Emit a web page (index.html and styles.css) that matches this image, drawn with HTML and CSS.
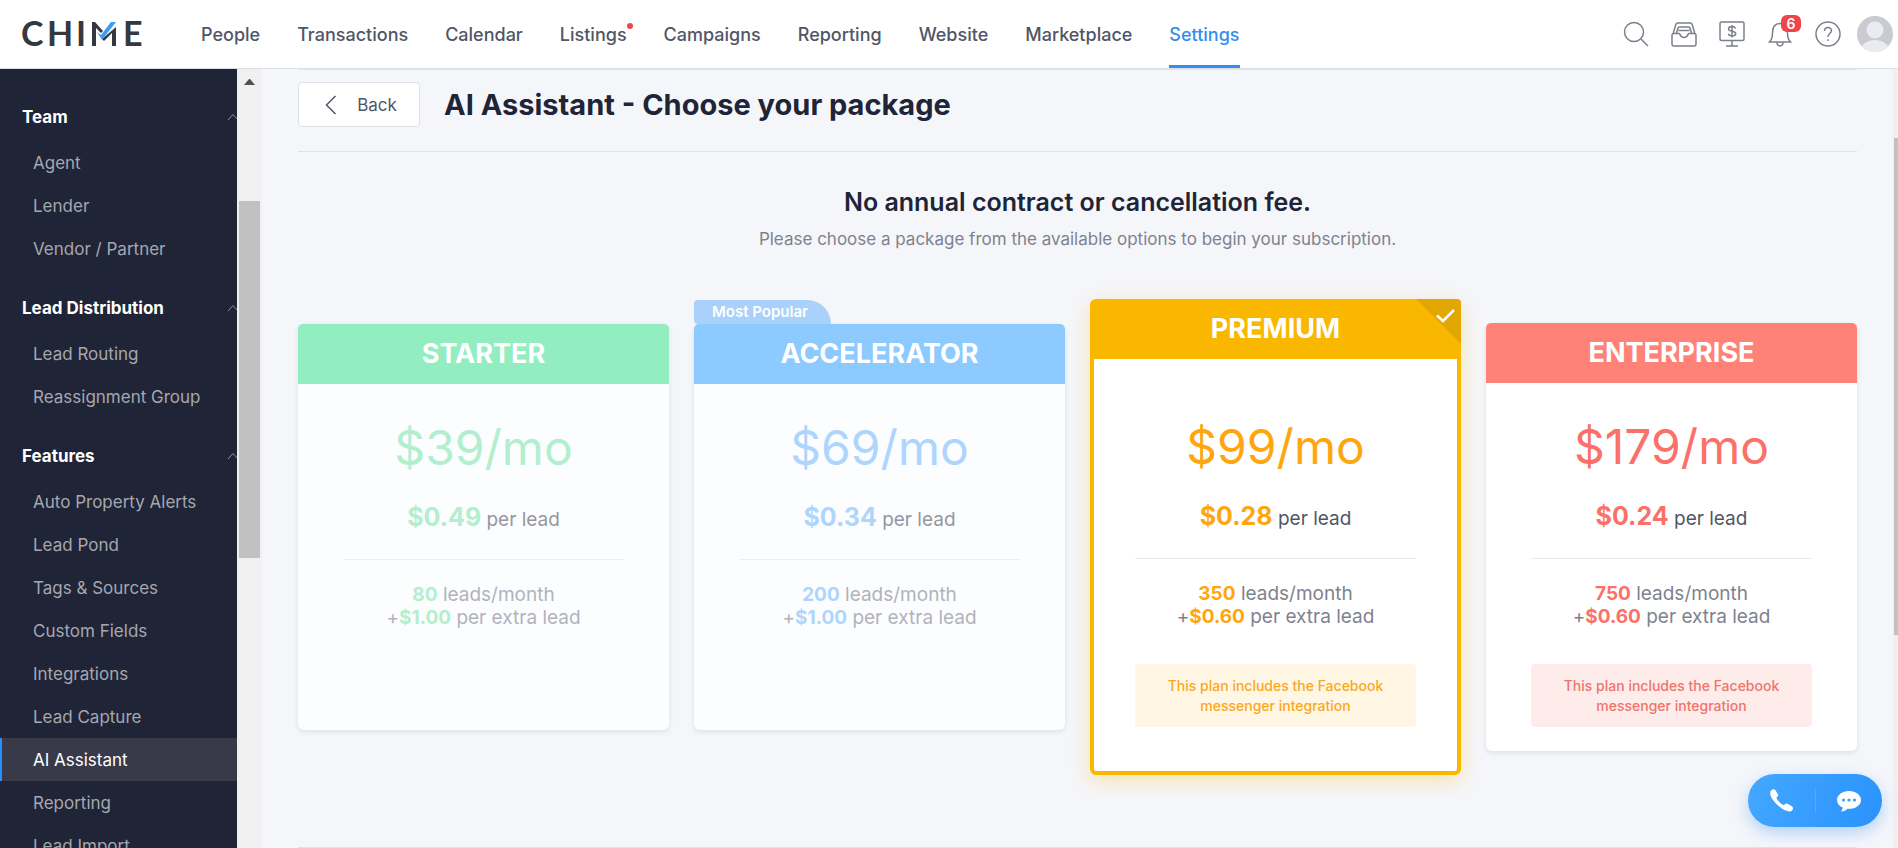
FILE: index.html
```html
<!DOCTYPE html>
<html lang="en">

<head>
  <meta charset="UTF-8">
  <meta name="viewport" content="width=device-width, initial-scale=1.0">
  <title>Chime - AI Assistant</title>
  <link rel="stylesheet" href="styles.css">
</head>
<body>
  <header class="topbar">
    <a class="logo" href="#" aria-label="Chime">
      <svg width="124" height="44" viewBox="0 0 124 44">
        <text class="logo-text" x="0 26 55 102" y="34">CHIE</text>
        <path fill="#36383f" d="M71 10h3l8 9-2 2-5-5v18h-4zM95 15v19h-4V21l-8 8-2-2z" />
        <path fill="#3b9cf8" d="M76 20l4 3L90 10h5L81 28z" />
      </svg>
    </a>
    <nav class="nav">
      <a href="#">People</a>
      <a href="#">Transactions</a>
      <a href="#">Calendar</a>
      <a href="#" class="has-dot">Listings</a>
      <a href="#">Campaigns</a>
      <a href="#">Reporting</a>
      <a href="#">Website</a>
      <a href="#">Marketplace</a>
      <a href="#" class="active">Settings</a>
    </nav>
    <div class="tools">
      <button class="tool" aria-label="Search">
        <svg viewBox="0 0 26 26"><circle cx="11" cy="11" r="9.5" /><path d="M18 18l7 7" /></svg>
      </button>
      <button class="tool" aria-label="Inbox">
        <svg viewBox="0 0 26 26"><path d="M2 13L5 3q.3-1 1.500-1h13q1.200 0 1.500 1L24 13M5.500 12L7 7q.3-1 1.300-1h9.400q1 0 1.300 1l1.500 5M7.500 9.500h11M1 14.500q0-2 2-2h5.500c.5 0 .5 4 4.500 4s4-4 4.500-4H23q2 0 2 2V23q0 2-2 2H3q-2 0-2-2z" /></svg>
      </button>
      <button class="tool" aria-label="Billing">
        <svg viewBox="0 0 26 26"><rect x="1" y="1" width="24" height="18.500" rx="1.500" /><path d="M13 20v5M7 25h12M16.500 7.500c-.5-1.200-1.700-2-3.500-2-2 0-3.500.9-3.500 2.400 0 3.300 7.200 1.300 7.200 4.600 0 1.500-1.600 2.500-3.700 2.500-1.900 0-3.200-.8-3.700-2.200M13 4v12.500" /></svg>
      </button>
      <button class="tool" aria-label="Notifications">
        <svg viewBox="0 0 26 26"><path d="M2.500 21c2.500-2.500 3-4 3-9 0-5 2-9.500 7.500-9.500s7.500 4.500 7.500 9.500c0 5 .5 6.500 3 9zM10 21.500c0 4.500 6 4.500 6 0" /></svg>
        <span class="badge">6</span>
      </button>
      <button class="tool" aria-label="Help">
        <svg viewBox="0 0 26 26"><circle cx="13" cy="13" r="12" /><path d="M9.500 10c0-4.700 7-4.500 7-.5 0 3-3.500 3-3.500 6.500M13 18.200v1.800" /></svg>
      </button>
    </div>
    <a class="avatar" href="#" aria-label="My account">
      <svg viewBox="0 0 36 36">
        <clipPath id="round"><circle cx="18" cy="18" r="18" /></clipPath>
        <g clip-path="url(#round)">
          <rect width="36" height="36" fill="#cacad2" />
          <circle cx="18" cy="14" r="8.500" fill="#ebecf1" />
          <ellipse cx="18" cy="36" rx="15" ry="12" fill="#ebecf1" />
        </g>
      </svg>
    </a>
  </header>

  <div class="page">
    <aside class="sidebar">
      <section class="group">
        <h4>Team <svg class="caret" viewBox="0 0 12 8"><path d="M1 7l5-5.500L11 7" /></svg></h4>
        <a href="#">Agent</a>
        <a href="#">Lender</a>
        <a href="#">Vendor / Partner</a>
      </section>
      <section class="group">
        <h4>Lead Distribution <svg class="caret" viewBox="0 0 12 8"><path d="M1 7l5-5.500L11 7" /></svg></h4>
        <a href="#">Lead Routing</a>
        <a href="#">Reassignment Group</a>
      </section>
      <section class="group">
        <h4>Features <svg class="caret" viewBox="0 0 12 8"><path d="M1 7l5-5.500L11 7" /></svg></h4>
        <a href="#">Auto Property Alerts</a>
        <a href="#">Lead Pond</a>
        <a href="#">Tags &amp; Sources</a>
        <a href="#">Custom Fields</a>
        <a href="#">Integrations</a>
        <a href="#">Lead Capture</a>
        <a href="#" class="active">AI Assistant</a>
        <a href="#">Reporting</a>
        <a href="#">Lead Import</a>
      </section>
    </aside>
    <div class="side-scroll"><div class="arrow"></div><div class="thumb"></div></div>

    <main class="main">
      <div class="head">
        <button class="back">
          <svg width="12" height="20" viewBox="0 0 12 20"><path d="M10.500 1L1.500 10l9 9" /></svg>
          Back
        </button>
        <h1>AI Assistant - Choose your package</h1>
      </div>

      <div class="intro">
        <h2>No annual contract or cancellation fee.</h2>
        <p>Please choose a package from the available options to begin your subscription.</p>
      </div>

      <div class="plans">
        <article class="plan starter faded">
          <h3>STARTER</h3>
          <div class="body">
            <div class="price">$39/mo</div>
            <div class="rate"><b>$0.49</b> per lead</div>
            <div class="leads"><b>80</b> leads/month<br>+<b>$1.00</b> per extra lead</div>
          </div>
        </article>
        <article class="plan accelerator faded">
          <span class="popular">Most Popular</span>
          <h3>ACCELERATOR</h3>
          <div class="body">
            <div class="price">$69/mo</div>
            <div class="rate"><b>$0.34</b> per lead</div>
            <div class="leads"><b>200</b> leads/month<br>+<b>$1.00</b> per extra lead</div>
          </div>
        </article>
        <article class="plan premium selected">
          <svg class="corner" viewBox="0 0 45 45"><path fill="#e3a703" d="M0 0h41q4 0 4 4v41z" /><path fill="none" stroke="#fff" stroke-width="2.500" d="M21 16.500l6 5.500L38 11" /></svg>
          <h3>PREMIUM</h3>
          <div class="body">
            <div class="price">$99/mo</div>
            <div class="rate"><b>$0.28</b> per lead</div>
            <div class="leads"><b>350</b> leads/month<br>+<b>$0.60</b> per extra lead</div>
            <div class="note">This plan includes the Facebook messenger integration</div>
          </div>
        </article>
        <article class="plan enterprise">
          <h3>ENTERPRISE</h3>
          <div class="body">
            <div class="price">$179/mo</div>
            <div class="rate"><b>$0.24</b> per lead</div>
            <div class="leads"><b>750</b> leads/month<br>+<b>$0.60</b> per extra lead</div>
            <div class="note">This plan includes the Facebook messenger integration</div>
          </div>
        </article>
      </div>
    </main>
    <div class="page-scroll"><div class="thumb"></div></div>
  </div>

  <div class="contact">
    <button aria-label="Call">
      <svg viewBox="0 0 24 24"><path d="M2 1.500C3.500 0 5.500-.3 6.500 1.200L9 5.500c.8 1.400-.8 2.300-1.500 3.300-.6 1 5.500 7.500 7.500 7.200 1.200-.3 2-2 3.500-1.200l4.300 2.400c1.600 1 1.500 2.500.4 4C18 27.500-3.500 8 2 1.500z" /></svg>
    </button>
    <button aria-label="Chat">
      <svg viewBox="0 0 24 24"><path d="M12 2c6.600 0 12 3.900 12 8.900s-5.400 8.900-12 8.900h-1.500C9 21.500 6.500 22.500 4 22.500c1-1.200 1.700-2.500 1.700-4C2.200 17 0 14.200 0 10.900 0 5.900 5.400 2 12 2z" /><g fill="#3c9ffb"><circle cx="6.500" cy="11" r="1.600" /><circle cx="12" cy="11" r="1.600" /><circle cx="17.500" cy="11" r="1.600" /></g></svg>
    </button>
  </div>
</body>

</html>
```

FILE: styles.css
```css
* {
  box-sizing: border-box;
}

body {
  margin: 0;
  height: 100vh;
  display: flex;
  flex-direction: column;
  overflow: hidden;
  font-family: Inter, "Liberation Sans", sans-serif;
  background: #f5f6fa;
  color: #515666;
}

h1, h2, h3, h4, p {
  margin: 0;
}

a {
  color: inherit;
  text-decoration: none;
}

button {
  font: inherit;
  color: inherit;
  border: 0;
  padding: 0;
  background: none;
  cursor: pointer;
}

/* top bar */
.topbar {
  flex: none;
  height: 69px;
  display: flex;
  align-items: center;
  padding: 0 5px 0 21px;
  background: #fff;
  border-bottom: 1px solid #dcdfe5;
}

.logo {
  width: 180px;
}

.logo svg {
  display: block;
}

.logo-text {
  font-family: Lato, sans-serif;
  font-size: 34px;
  font-weight: 700;
  fill: #36383f;
}

.nav {
  align-self: stretch;
  display: flex;
  gap: 37px;
  font-size: 18px;
  font-weight: 500;
}

.nav a {
  position: relative;
  display: flex;
  align-items: center;
}

.nav .active {
  color: #338fee;
}

.nav .active::after {
  content: "";
  position: absolute;
  left: 0;
  right: 0;
  bottom: 0;
  height: 3px;
  background: #338fee;
}

.has-dot::after {
  content: "";
  position: absolute;
  top: 23px;
  right: -6px;
  width: 6px;
  height: 6px;
  border-radius: 50%;
  background: #f0454f;
}

.tools {
  margin-left: auto;
  display: flex;
  gap: 22px;
}

.tool {
  position: relative;
  width: 26px;
  height: 26px;
}

.tool svg {
  display: block;
  fill: none;
  stroke: #7c808c;
  stroke-width: 1.5;
}

.badge {
  position: absolute;
  top: -6px;
  left: 14px;
  width: 20px;
  height: 17px;
  border-radius: 6px;
  background: #ee454c;
  color: #fff;
  font-size: 14px;
  font-weight: 600;
  line-height: 17px;
}

.avatar {
  width: 36px;
  height: 36px;
  margin-left: 16px;
}

/* left menu */
.page {
  flex: 1;
  min-height: 0;
  display: flex;
}

.sidebar {
  flex: none;
  width: 237px;
  padding-top: 23px;
  overflow: hidden;
  background: #202437;
  color: #a6a7af;
  font-size: 17px;
}

.group {
  margin-bottom: 13px;
}

.group h4 {
  height: 49px;
  padding-left: 22px;
  display: flex;
  align-items: center;
  justify-content: space-between;
  color: #fff;
  font-size: 17px;
  font-weight: 700;
}

.caret {
  width: 12px;
  height: 8px;
  margin-right: -2px;
  fill: none;
  stroke: #8c8f9c;
}

.group a {
  height: 43px;
  padding-left: 33px;
  display: flex;
  align-items: center;
}

.group .active {
  padding-left: 31px;
  border-left: 2px solid #2491fc;
  background: #383a49;
  color: #fff;
}

.side-scroll {
  flex: none;
  width: 25px;
  padding: 10px 2px;
  background: #f0f0f1;
}

.side-scroll .arrow {
  width: 11px;
  margin: 0 auto 116px;
  border: 5px solid transparent;
  border-top: 0;
  border-bottom: 6px solid #505050;
}

.side-scroll .thumb {
  height: 47%;
  background: #c1c1c1;
}

.page-scroll {
  flex: none;
  width: 5px;
  padding: 69px 0 0 1px;
  background: #f0f0f1;
}

.page-scroll .thumb {
  height: 70%;
  background: #c1c1c1;
}

/* content */
.main {
  flex: 1;
  min-width: 0;
  padding: 0 36px;
  overflow: hidden;
}

.head {
  display: flex;
  align-items: center;
  gap: 24px;
  padding: 12px 0 24px;
  border-top: 1px solid #dfe6ed;
  border-bottom: 1px solid #dfe2e9;
}

.head h1 {
  color: #202437;
  font-size: 29px;
  font-weight: 700;
  line-height: 36px;
}

.back {
  width: 122px;
  height: 45px;
  display: flex;
  align-items: center;
  justify-content: center;
  gap: 20px;
  padding-left: 4px;
  border: 1px solid #dfe1e8;
  border-radius: 4px;
  background: #fff;
  font-size: 17px;
}

.back svg {
  fill: none;
  stroke: #515666;
  stroke-width: 1.5;
}

.intro {
  padding: 35px 0 49px;
  text-align: center;
}

.intro h2 {
  color: #202437;
  font-size: 25px;
  font-weight: 600;
  line-height: 30px;
}

.intro p {
  margin-top: 11px;
  color: #7f828c;
  font-size: 17px;
  line-height: 22px;
}

.plans {
  display: grid;
  grid-template-columns: repeat(4, 1fr);
  gap: 25px;
  align-items: start;
  padding-bottom: 72px;
  border-bottom: 1px solid #dfe2e9;
}

.plan {
  position: relative;
  margin-top: 24px;
  border-radius: 6px;
  background: #fff;
  box-shadow: 0 2px 5px rgba(32, 36, 55, 0.1);
  text-align: center;
}

.plan h3 {
  height: 60px;
  border-radius: 5px 5px 0 0;
  background: var(--head);
  color: #fff;
  font-size: 27px;
  font-weight: 700;
  line-height: 60px;
}

.plan .body {
  padding: 36px 45px 24px;
}

.price,
.plan b {
  color: var(--accent);
}

.price {
  font-size: 48px;
  font-weight: 400;
  line-height: 56px;
}

.rate {
  margin-top: 26px;
  padding-bottom: 24px;
  border-bottom: 1px solid #e8eaee;
  font-size: 19px;
  line-height: 30px;
}

.plan b {
  font-weight: 700;
}

.rate b {
  font-size: 25px;
}

.leads {
  padding-top: 23px;
  color: #7f828e;
  font-size: 19px;
  line-height: 23px;
}

.note {
  margin-top: 36px;
  padding: 12px 30px 11px;
  border-radius: 4px;
  background: var(--tint);
  color: var(--note);
  font-size: 14px;
  font-weight: 500;
  line-height: 20px;
}

.starter {
  --head: #92eec0;
  --accent: #b2efce;
}

.accelerator {
  --head: #8ccaff;
  --accent: #aed5fc;
}

.premium {
  --head: #fab700;
  --accent: #ffa60e;
  --tint: #fff7e3;
  --note: #f9a825;
}

.enterprise {
  --head: #ff8279;
  --accent: #fb7069;
  --tint: #fdecea;
  --note: #ee746e;
}

/* plans below the current one */
.faded {
  min-height: 406px;
  margin-top: 25px;
  background: #fcfdff;
}

.faded .rate {
  color: #9497a0;
  border-color: #eceef2;
}

.faded .leads {
  color: #b1b3ba;
}

.popular {
  position: absolute;
  top: -24px;
  left: 0;
  width: 137px;
  height: 24px;
  padding-left: 18px;
  border-radius: 4px 24px 0 4px;
  background: #a9d1fb;
  color: #fff;
  font-size: 15px;
  font-weight: 600;
  line-height: 24px;
  text-align: left;
}

.selected {
  margin-top: 0;
  border: 4px solid var(--head);
  box-shadow: 0 6px 20px rgba(250, 183, 0, 0.3);
}

.selected h3 {
  height: 56px;
  border-radius: 0;
  line-height: 52px;
}

.selected .body {
  padding: 60px 41px 44px;
}

.corner {
  position: absolute;
  top: -4px;
  right: -4px;
  width: 45px;
  height: 45px;
}

/* floating call / chat buttons */
.contact {
  position: fixed;
  right: 16px;
  bottom: 21px;
  width: 134px;
  height: 53px;
  display: flex;
  align-items: center;
  border-radius: 27px;
  background: linear-gradient(110deg, #43a8ff, #2a92fd);
  box-shadow: 0 6px 16px rgba(51, 143, 238, 0.35);
}

.contact button {
  flex: 1;
}

.contact button + button {
  border-left: 1px solid #4fabfd;
}

.contact svg {
  display: block;
  width: 24px;
  height: 24px;
  margin: 0 auto;
  fill: #fff;
}
```
